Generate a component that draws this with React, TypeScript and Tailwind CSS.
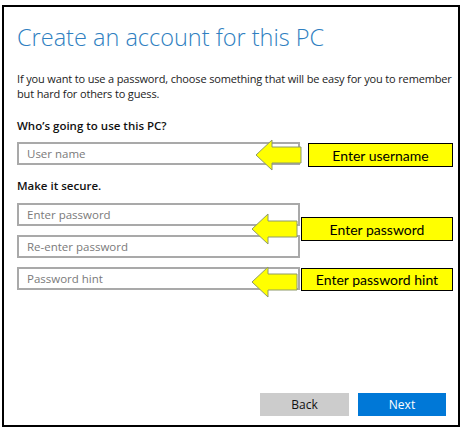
import React from 'react';

const ui = { fontFamily: '"Open Sans", "Noto Sans", sans-serif' };
const callout = { fontFamily: 'Lato, "Open Sans", sans-serif' };

// left-pointing block arrow used for the callouts
const Arrow: React.FC<{ className: string }> = ({ className }) => (
  <svg className={`absolute ${className}`} width="48" height="32" viewBox="0 0 48 32">
    <polygon
      points="1,16 17,1 17,8 46,8 46,24 17,24 17,31"
      fill="#ffff00"
      stroke="#8e9a6b"
      strokeWidth="1"
    />
  </svg>
);

const Field: React.FC<{ placeholder: string; className?: string }> = ({ placeholder, className = '' }) => (
  <div
    className={`w-[283px] h-[23px] border-2 border-[#a9a9a9] bg-white flex items-center pl-[8px] text-[11.5px] text-[#7a7a7a] ${className}`}
  >
    {placeholder}
  </div>
);

const Callout: React.FC<{ text: string; className: string }> = ({ text, className }) => (
  <div
    className={`absolute bg-[#ffff00] border border-black flex items-center justify-center text-[14px] text-black ${className}`}
    style={callout}
  >
    {text}
  </div>
);

export default function App() {
  return (
    <div className="relative w-[461px] h-[429px] bg-white overflow-hidden" style={ui}>
      <div className="absolute left-[2px] top-[5px] w-[458px] h-[422px] border-2 border-black flex flex-col pl-[13px]">
        <h1 className="mt-[16px] text-[23.5px] leading-[28px] font-light text-[#2f7fc1]">
          Create an account for this PC
        </h1>

        <p className="mt-[20px] text-[11px] leading-[15px] tracking-[-0.15px] text-[#222]">
          If you want to use a password, choose something that will be easy for you to remember
          <br />
          but hard for others to guess.
        </p>

        <h2 className="mt-[17px] text-[11.5px] leading-[15px] font-semibold text-[#111]">
          Who’s going to use this PC?
        </h2>
        <Field placeholder="User name" className="mt-[9px]" />

        <h2 className="mt-[13px] text-[11.5px] leading-[15px] font-semibold text-[#111]">Make it secure.</h2>
        <Field placeholder="Enter password" className="mt-[10px]" />
        <Field placeholder="Re-enter password" className="mt-[9px]" />
        <Field placeholder="Password hint" className="mt-[9px]" />

        <div className="flex-1" />

        <div className="flex justify-end gap-[9px] pr-[12px] mb-[9px]">
          <button className="w-[89px] h-[23px] bg-[#cccccc] text-[12px] text-[#111]">Back</button>
          <button className="w-[88px] h-[23px] bg-[#0078d7] text-[12px] text-white">Next</button>
        </div>
      </div>

      <Arrow className="left-[255px] top-[139px]" />
      <Arrow className="left-[251px] top-[213px]" />
      <Arrow className="left-[251px] top-[266px]" />

      <Callout text="Enter username" className="left-[308px] top-[143px] w-[145px] h-[24px]" />
      <Callout text="Enter password" className="left-[301px] top-[217px] w-[152px] h-[24px]" />
      <Callout text="Enter password hint" className="left-[301px] top-[268px] w-[152px] h-[23px]" />
    </div>
  );
}
